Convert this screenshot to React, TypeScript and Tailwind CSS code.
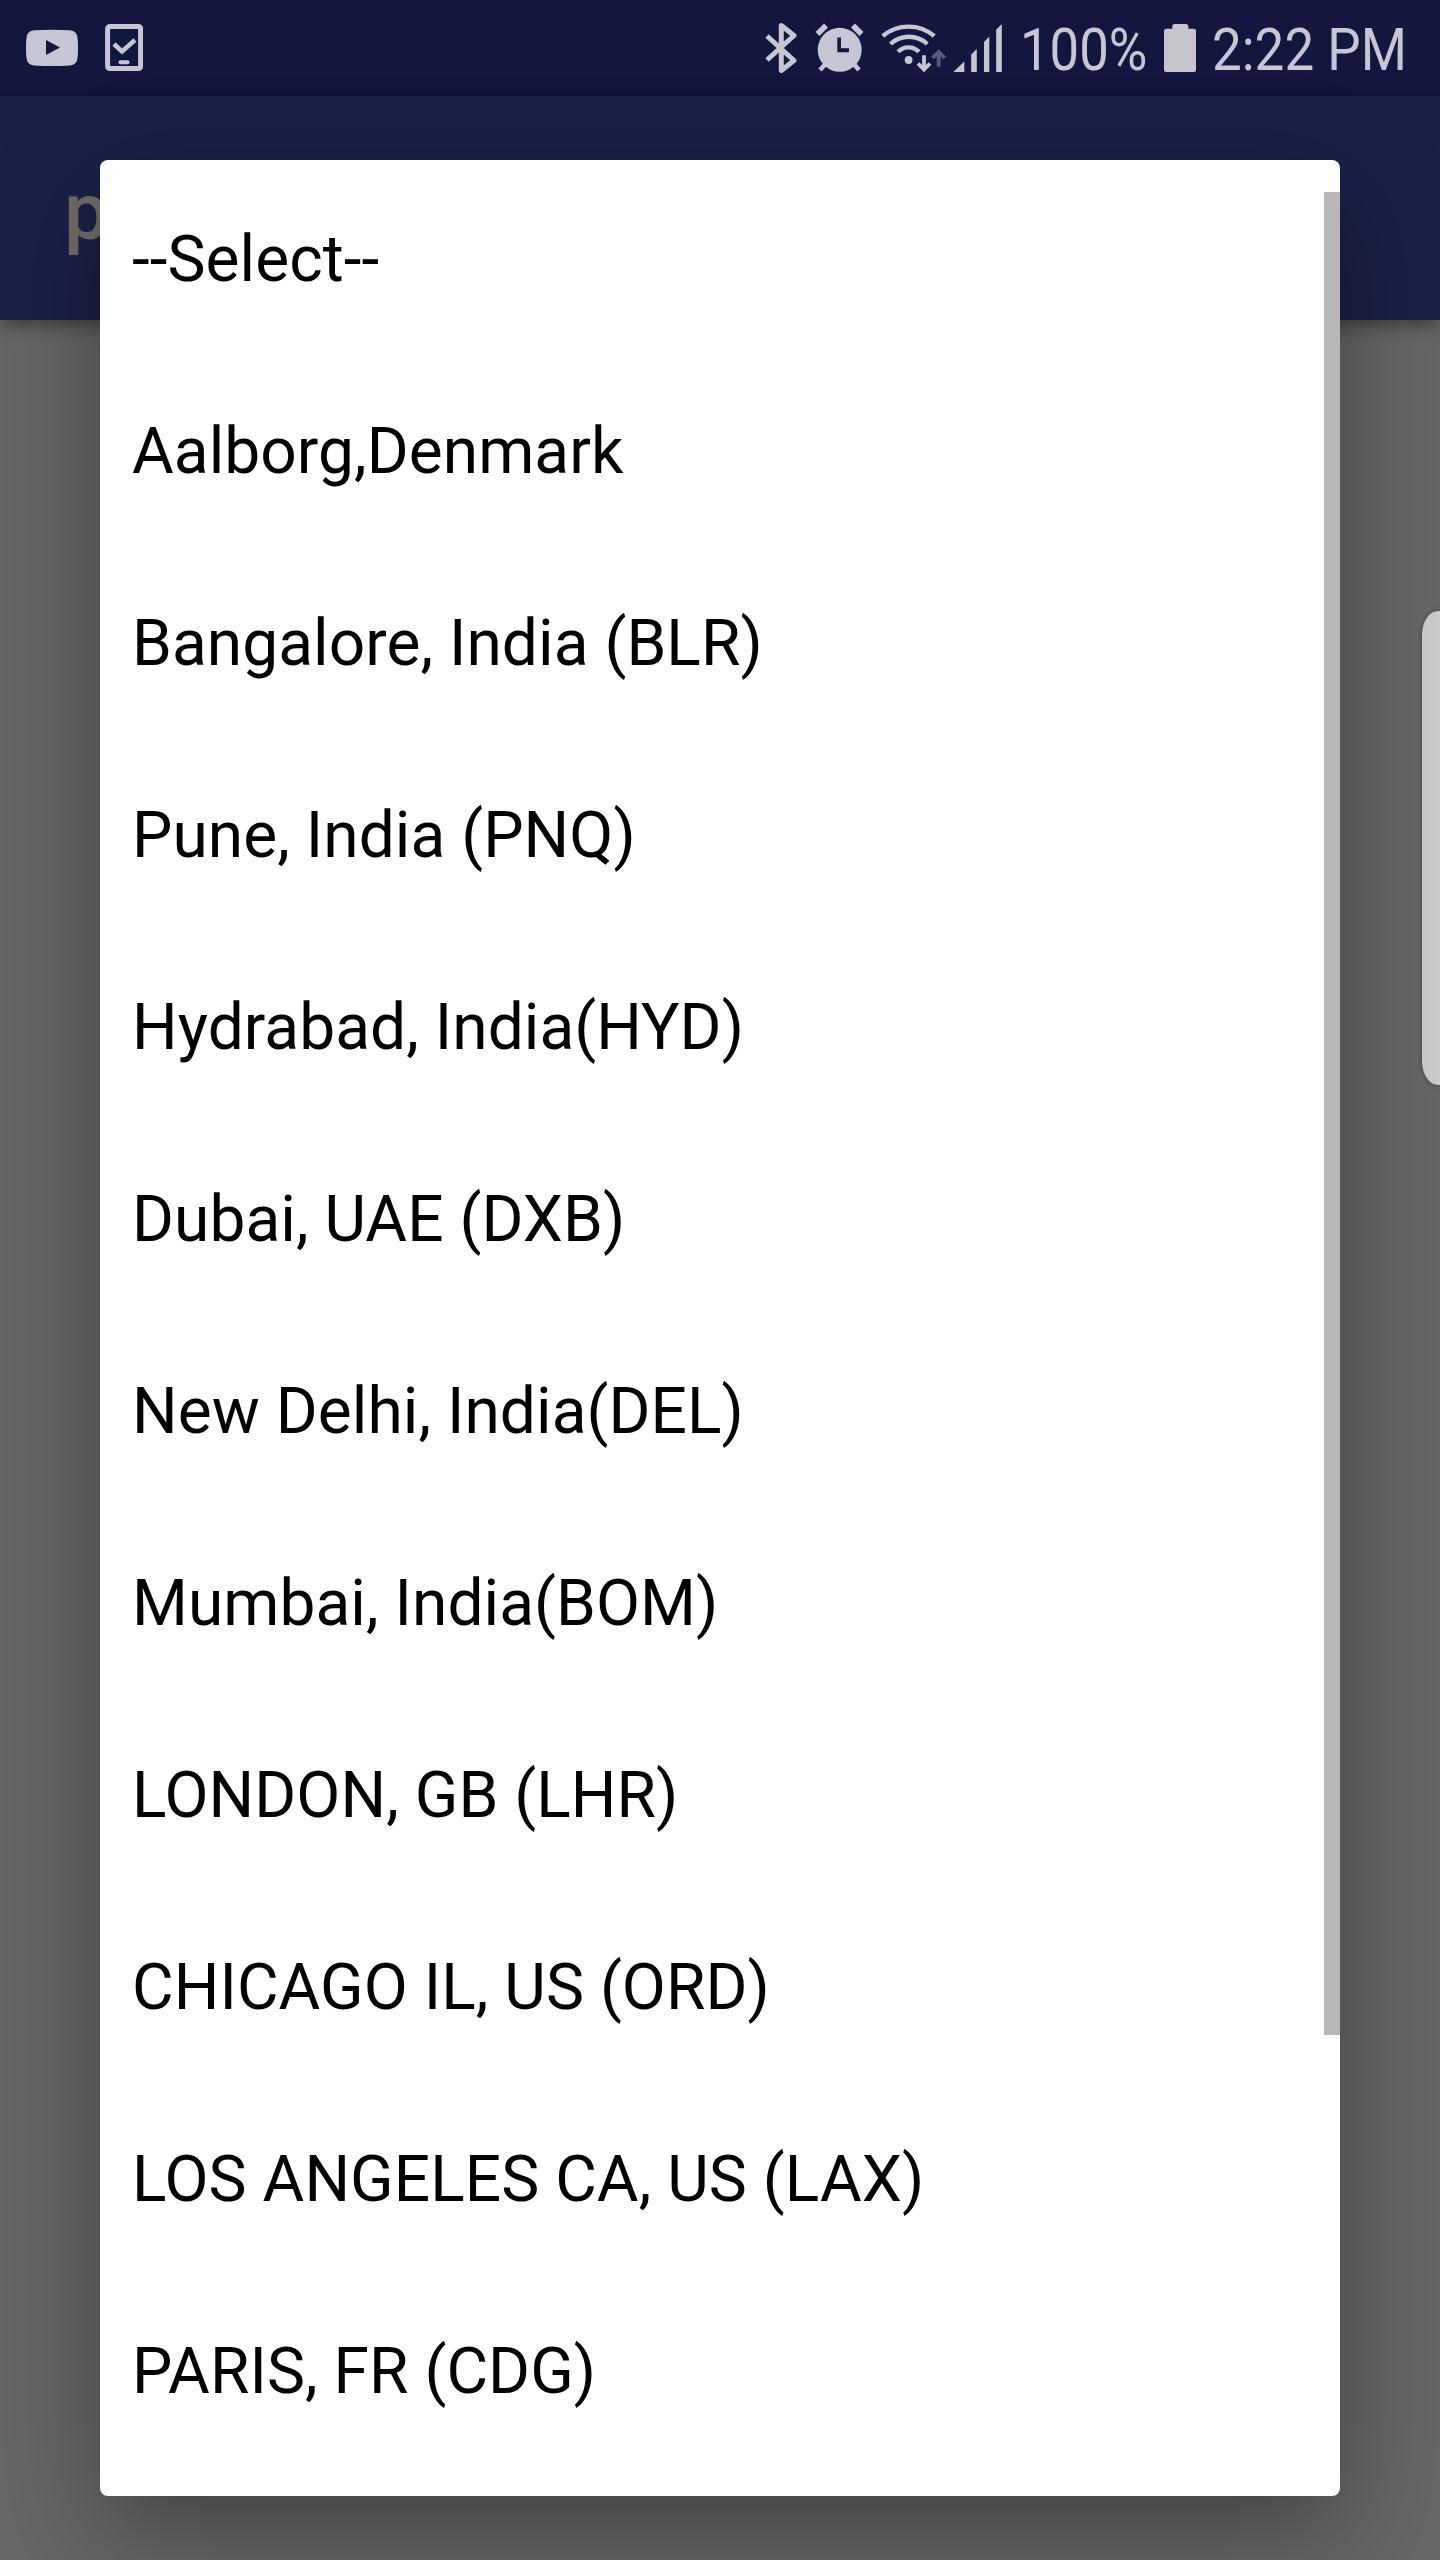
import React from "react";

const options = [
  "--Select--",
  "Aalborg,Denmark",
  "Bangalore, India (BLR)",
  "Pune, India (PNQ)",
  "Hydrabad, India(HYD)",
  "Dubai, UAE (DXB)",
  "New Delhi, India(DEL)",
  "Mumbai, India(BOM)",
  "LONDON, GB (LHR)",
  "CHICAGO IL, US (ORD)",
  "LOS ANGELES CA, US (LAX)",
  "PARIS, FR (CDG)",
];

function StatusBar() {
  return (
    <header className="flex h-24 items-center bg-[#131740] pl-[26px] text-[#c6c7d4]">
      <svg className="h-24 w-[52px] shrink-0" viewBox="26 0 52 96" fill="currentColor">
        <path
          fillRule="evenodd"
          d="M34 30.3Q52 29 70 30.3Q77 31 77.5 38Q78.500 48 77.500 58Q77 65 70 65.400Q52 66.500 34 65.400Q27 65 26.500 58Q25.500 48 26.500 38Q27 31 34 30.300ZM46 40V55L60 47.500Z"
        />
      </svg>
      <svg className="ml-[27px] h-24 w-[38px] shrink-0" viewBox="105 0 38 96" fill="none" stroke="currentColor">
        <rect x="107.600" y="26.600" width="33" height="42" rx="2" strokeWidth="5" />
        <path d="M114 44L122 51.500L135 40" strokeWidth="4.500" />
        <path d="M120.500 62.300H127.500" strokeWidth="4" strokeLinecap="round" />
      </svg>

      <svg className="ml-[622px] h-24 w-[32px] shrink-0" viewBox="765 0 32 96" fill="none" stroke="currentColor">
        <path
          d="M767 36L794 60.500L781.300 70.500V25.500L794 35.500L767 60"
          strokeWidth="5"
          strokeLinejoin="round"
        />
      </svg>
      <svg className="ml-[18px] h-24 w-[50px] shrink-0" viewBox="815 0 50 96" fill="none" stroke="currentColor">
        <circle cx="839.700" cy="49.800" r="22" fill="currentColor" stroke="none" />
        <path d="M817.500 34L826 25.500M853 25.500L861.500 34" strokeWidth="5.500" />
        <path d="M826 63.500L820 70M853.500 63.500L859 70" strokeWidth="4.500" />
        <path d="M837.300 37.500H841V48.300H849V52.300H837.300Z" fill="#131740" stroke="none" />
      </svg>
      <svg className="ml-[15px] h-24 w-[68px] shrink-0" viewBox="880 0 68 96" fill="none" stroke="currentColor">
        <path
          d="M882.700 36A40 40 0 0 1 934.300 36M890.500 44A27 27 0 0 1 927.300 44M898 51.800A14.500 14.500 0 0 1 919 51.800"
          strokeWidth="4.300"
        />
        <circle cx="908.600" cy="60" r="3.900" fill="currentColor" stroke="none" />
        <path d="M924 55.300V69M918 63.500L924 69.500L930 63.500" strokeWidth="3.800" />
        <path d="M938.700 66.500V52M932.500 57.800L938.700 51.800L944.900 57.800" stroke="#575b7c" strokeWidth="3.800" />
      </svg>
      <svg className="ml-[4px] h-24 w-[51px] shrink-0" viewBox="952 0 51 96" fill="currentColor">
        <path d="M953.300 72H964.300V61.500ZM971.200 72H976.800V49L971.200 54.500ZM984 72H989.300V36.500L984 42ZM996.200 72H1001.800V24.300L996.200 29.500Z" />
      </svg>
      <span className="ml-[17px] w-[144px] shrink-0 origin-left scale-x-[0.878] pt-1 whitespace-nowrap text-[60px] leading-[96px]">
        100%
      </span>
      <svg className="h-24 w-8 shrink-0" viewBox="1164 0 32 96" fill="#c8c6cd">
        <rect x="1164" y="28.800" width="32" height="43.200" rx="2.500" />
        <rect x="1172.300" y="24" width="16" height="12" rx="2.500" />
      </svg>
      <span className="ml-[16px] shrink-0 origin-left scale-x-[0.883] pt-1 whitespace-nowrap text-[60px] leading-[96px]">
        2:22 PM
      </span>
    </header>
  );
}

export default function App() {
  return (
    <div className="relative flex h-[2560px] w-[1440px] flex-col overflow-hidden bg-[#676767] font-['Roboto',sans-serif]">
      <StatusBar />
      <div className="flex h-56 items-center bg-[#1b2049] pt-[7px] pl-16 shadow-[0_4px_18px_rgba(0,0,0,0.45)]">
        <h1 className="text-[80px] leading-none font-medium text-[#716c6a]">p</h1>
      </div>

      <div className="absolute top-[611px] right-0 h-[474px] w-[18px] rounded-l-[16px_24px] bg-[#cdcdcd] shadow-[0_0_4px_rgba(0,0,0,0.4)]" />

      <div
        role="listbox"
        className="absolute top-40 left-[100px] flex h-[2336px] w-[1240px] overflow-hidden rounded-lg bg-white shadow-[0_36px_110px_rgba(0,0,0,0.36)]"
      >
        <ul className="flex-1 pt-[4px] pl-8 text-[64px] tracking-[0.06px] text-black">
          {options.map((label) => (
            <li key={label} role="option" className="flex h-48 items-center whitespace-nowrap">
              {label}
            </li>
          ))}
        </ul>
        <div className="mt-8 h-[1843px] w-4 bg-[#b8b8b8]" />
      </div>
    </div>
  );
}
